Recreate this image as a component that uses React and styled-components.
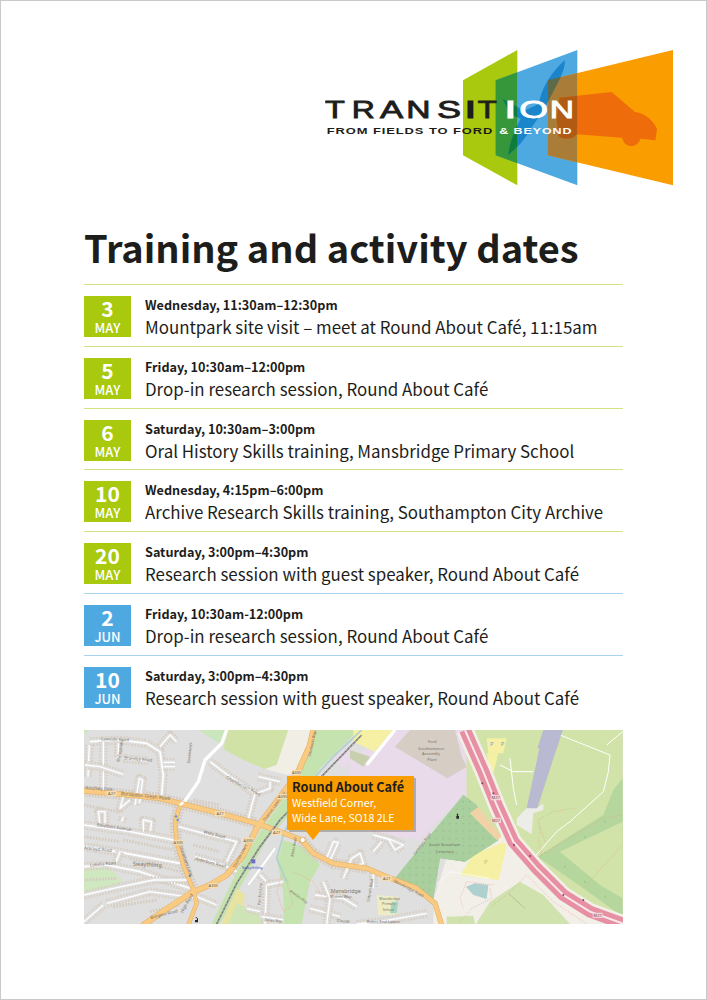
import React from "react";
import styled, { createGlobalStyle } from "styled-components";

const Global = createGlobalStyle`
  html, body { margin: 0; padding: 0; background: #fff; }
  body { font-family: "Noto Sans CJK SC", "Noto Sans", sans-serif; }
`;

const Page = styled.main`
  box-sizing: border-box;
  width: 707px;
  height: 1000px;
  border: 1px solid #c9c9c9;
  background: #fff;
  color: #1d1d1b;
  padding: 49px 33px 0 83px;
  overflow: hidden;
`;
const Header = styled.header`
  display: flex;
  justify-content: flex-end;
  height: 136px;
`;
const LogoSvg = styled.svg`
  display: block;
  width: 348px;
  height: 136px;
`;
const Title = styled.h1`
  margin: 35px 0 0;
  font-size: 38px;
  line-height: 52px;
  font-weight: 700;
  letter-spacing: 0;
  white-space: nowrap;
`;
const List = styled.ul`
  list-style: none;
  margin: 11px 0 0;
  padding: 0;
  width: 539px;
`;
const Row = styled.li`
  box-sizing: border-box;
  height: 61.83px;
  padding-top: 11px;
  display: flex;
  gap: 14px;
  border-top: 1px solid ${(p) => (p.$tone === "blue" ? "#a9d2ef" : "#d3e283")};
`;
const Badge = styled.div`
  flex: none;
  width: 47px;
  height: 41px;
  background: ${(p) => (p.$tone === "blue" ? "#4fa9e1" : "#a8c90e")};
  color: #fff;
  display: flex;
  flex-direction: column;
  align-items: center;
`;
const Day = styled.span`
  font-size: 21px;
  line-height: 24px;
  font-weight: 700;
`;
const Month = styled.span`
  font-size: 13px;
  line-height: 15px;
  font-weight: 500;
`;
const Body = styled.div`
  min-width: 0;
  white-space: nowrap;
`;
const When = styled.div`
  font-size: 12.65px;
  line-height: 18px;
  font-weight: 700;
`;
const What = styled.div`
  font-size: 16.9px;
  line-height: 26px;
  font-weight: 400;
`;
const MapBox = styled.section`
  position: relative;
  margin-top: 13px;
  width: 539px;
  height: 194px;
  overflow: hidden;
`;
const MapSvg = styled.svg`
  display: block;
  width: 539px;
  height: 194px;
`;
const Callout = styled.div`
  position: absolute;
  left: 203px;
  top: 46px;
  box-sizing: border-box;
  width: 127px;
  height: 54px;
  padding: 3px 5px 0;
  background: #f99d00;
  box-shadow: 2px 2px 0 rgba(110, 110, 110, 0.45);
  white-space: nowrap;
  &::after {
    content: "";
    position: absolute;
    left: 18px;
    top: 54px;
    border-style: solid;
    border-width: 10px 8.5px 0;
    border-color: #f99d00 transparent transparent;
  }
`;
const CalloutName = styled.div`
  font-size: 12.7px;
  line-height: 16px;
  font-weight: 700;
  color: #1d1d1b;
`;
const CalloutAddress = styled.div`
  font-size: 10.6px;
  line-height: 15px;
  color: #fff;
`;
const MapLabel = styled.text`
  font-family: "Noto Sans", "Liberation Sans", sans-serif;
  font-size: ${(p) => p.$size || 15}px;
  fill: ${(p) => p.$fill || "#77726a"};
`;
const LogoWord = styled.text`
  font-family: "Liberation Sans", sans-serif;
  font-size: 72px;
  font-weight: 400;
  stroke-width: 2.5px;
`;
const LogoLine = styled.text`
  font-family: "Liberation Sans", sans-serif;
  font-size: 28px;
  font-weight: 700;
  letter-spacing: 2px;
`;

const GREEN = "M459,123 L622,32 V438 L459,348 Z";
const BLUE = "M557,123 L802,32 V438 L557,348 Z";
const ORANGE = "M713,123 L1089,32 V438 L713,348 Z";
const PLANE =
  "M765,62 C735,88 712,120 695,160 L685,195 L642,214 L578,178 L600,224 L632,238 C612,275 598,315 595,346 C622,325 645,300 662,268 L700,214 L752,113 C760,95 765,80 765,62 Z";
const CAR =
  "M748,175 L905,158 L975,218 C1005,222 1032,245 1041,270 L1036,303 L991,298 C985,325 945,330 936,295 L800,285 C790,303 755,300 745,290 L740,240 Z";

const WORD = [
  ["T", 45, 1.35], ["R", 125, 1.33], ["A", 210, 1.45], ["N", 289, 1.4], ["S", 381, 1.5],
  ["I", 462, 1.9], ["T", 503, 1.3], ["I", 582, 1.9], ["O", 628, 1.54], ["N", 719, 1.4],
];

function Logo() {
  return (
    <LogoSvg viewBox="45 32 1044 408" role="img" aria-label="Transition logo">
      <defs>
        <clipPath id="clipGreen"><path d={GREEN} /></clipPath>
        <clipPath id="clipBlue"><path d={BLUE} /></clipPath>
        <clipPath id="clipOB"><path d="M713,123 L802,100 V370 L713,348 Z" /></clipPath>
      </defs>
      <path d={GREEN} fill="#a8c90e" />
      <path d={BLUE} fill="#4fa9e1" />
      <path d={BLUE} fill="#36973a" clipPath="url(#clipGreen)" />
      <path d={ORANGE} fill="#f99d00" />
      <path d={ORANGE} fill="#a97d37" clipPath="url(#clipBlue)" />
      <g clipPath="url(#clipBlue)"><path d={PLANE} fill="#1b85cb" /></g>
      <g clipPath="url(#clipGreen)"><g clipPath="url(#clipBlue)"><path d={PLANE} fill="#0f7c3c" /></g></g>
      <path d={PLANE} fill="#5f6a49" clipPath="url(#clipOB)" />
      <path d={CAR} fill="#ee6c09" />
      <path d={CAR} fill="#b15a14" clipPath="url(#clipBlue)" />
      {WORD.map(([c, x, s], i) => (
        <LogoWord
          key={i}
          transform={`translate(${x} 237) scale(${s} 1)`}
          fill={i > 6 ? "#fff" : "#1d1d1b"}
          stroke={i > 6 ? "#fff" : "#1d1d1b"}
        >
          {c}
        </LogoWord>
      ))}
      <LogoLine x="50" y="285" fill="#1d1d1b" textLength="500" lengthAdjust="spacingAndGlyphs">FROM FIELDS TO FORD</LogoLine>
      <LogoLine x="568" y="285" fill="#fff" textLength="219" lengthAdjust="spacingAndGlyphs">&amp; BEYOND</LogoLine>
    </LogoSvg>
  );
}

const AREAS = [
  ["M12,15 H30 L12,26 Z", "#c9e6bd"],
  ["M355,15 H445 L428,60 L410,50 Z", "#c9e6bd"],
  ["M445,15 H625 L590,120 L555,132 L490,105 L430,72 Z", "#d0e2a6"],
  ["M625,15 H700 L672,140 L620,150 L555,132 L590,120 Z", "#f1eee6"],
  ["M12,430 L70,420 L100,440 L130,470 L60,500 L12,500 Z", "#cfe8bf"],
  ["M705,15 H835 L720,130 L650,245 L560,345 L490,470 L420,597 H395 L470,440 L540,320 L640,180 Z", "#c5e3ae"],
  ["M610,345 L680,370 L720,420 L690,470 L665,597 H612 L610,505 L592,410 Z", "#c5e3ae"],
  ["M470,490 L495,510 L480,597 H425 Z", "#e8e3a0"],
  ["M470,535 L530,560 L550,597 H445 Z", "#cfe5b8"],
  ["M760,100 L805,65 L830,90 L790,130 Z", "#e9dbea"],
  ["M810,100 L880,60 L945,15 H1145 L1225,240 L1150,210 L1020,345 L810,310 Z", "#e9dbea"],
  ["M945,65 L990,15 H1125 L1145,95 L1160,125 L1102,160 Z", "#d6cdc4"],
  ["M820,15 H940 L885,80 L820,50 Z", "#f5f0a3"],
  ["M810,75 L870,95 L850,125 L810,100 Z", "#c7cfae"],
  ["M1160,15 H1628 V597 H1160 Z", "#d1e3a8"],
  ["M1060,597 L1062,520 L1100,400 L1155,410 L1250,350 L1290,300 L1330,360 L1390,430 L1490,520 L1560,597 Z", "#f2efe9"],
  ["M945,460 L1150,210 L1190,240 L1255,345 L1155,410 L1080,400 L1060,520 Z", "#a9cf9e"],
  ["M1140,450 L1180,390 L1285,345 L1255,465 Z", "#f5f0a3"],
  ["M1158,485 L1185,475 L1225,480 L1220,522 L1180,510 Z", "#aed1d0"],
  ["M1188,597 L1230,530 L1320,470 L1390,510 L1470,597 Z", "#d0e3ae"],
  ["M1100,597 L1100,575 L1180,572 L1185,597 Z", "#d0e3ae"],
  ["M1373,395 L1450,345 L1570,270 L1600,195 L1628,160 V575 L1510,490 Z", "#b5d79d"],
  ["M1440,380 L1628,290 V520 L1560,480 Z", "#d1e3a8"],
  ["M890,510 L955,515 L950,570 L895,570 Z", "#eeecc4"],
  ["M935,530 L955,530 L950,565 L930,565 Z", "#a6d6c0"],
  ["M1390,15 H1448 L1370,255 L1340,250 Z", "#b9b9d1"],
  ["M1310,280 L1340,250 L1370,250 L1390,235 L1390,255 L1360,265 L1355,328 L1310,300 Z", "#ecece8"],
  ["M1220,40 H1280 L1270,85 L1225,85 Z", "#f5f0a3"],
  ["M1220,85 H1255 L1240,145 L1230,145 Z", "#f5f0a3"],
];

/* Minor roads: a dashed band of houses either side, a gap of ground, then the white carriageway. */
const STREETS = [
  ["M30,50 L120,45 L200,55 L240,80 L250,150 L245,210", 5],
  ["M70,50 L70,195", 4],
  ["M28,60 L24,155", 4],
  ["M115,55 L115,100", 4],
  ["M15,120 L60,125 L130,148", 4],
  ["M130,100 L205,108", 4],
  ["M250,112 L285,112 M250,125 L285,125", 4],
  ["M165,240 L178,160 L188,165 L178,235", 4],
  ["M130,215 L120,250 L150,225", 4],
  ["M240,65 L270,30 L290,50", 4],
  ["M60,300 L55,260 L75,260 L75,295", 4],
  ["M190,325 L190,285 L215,290 L210,330", 4],
  ["M125,290 L130,275", 4],
  ["M390,110 L450,155 L525,205 L505,280", 4],
  ["M535,155 L600,170 M570,170 L570,190 L530,205", 4],
  ["M12,300 L140,318 L280,345", 5],
  ["M295,305 L390,330 L470,350 L435,420", 4],
  ["M12,365 L110,380 L300,415", 5],
  ["M345,395 L430,420 L470,440", 4],
  ["M120,380 L105,420", 4],
  ["M12,425 L80,420 L180,440 L330,490", 5],
  ["M12,510 L100,490 L220,465 L320,465", 4],
  ["M80,535 L210,500 L340,518", 4],
  ["M12,590 L70,540", 4],
  ["M350,515 L410,540", 4],
  ["M540,450 L560,470 L555,597", 4],
  ["M500,550 L540,560", 4],
  ["M560,480 L610,470", 4],
  ["M545,575 L610,585", 4],
  ["M740,400 L760,350 L775,352 L752,402 Z", 4],
  ["M705,510 L790,520 L830,545", 5],
  ["M690,550 L780,575", 4],
  ["M730,470 L750,520 L740,597", 4],
  ["M790,460 L815,400 L840,385 L850,415 L825,425", 4],
  ["M880,330 L935,345 L970,360 L945,375 L925,340", 4],
  ["M880,380 L905,350", 4],
  ["M830,597 L900,590 L1040,565", 4],
  ["M880,435 L880,490", 4],
];

const WHITE = [
  ["M440,15 L425,55 L375,105 L355,170 L310,235", 10],
  ["M945,15 L860,120", 10],
  ["M585,370 L505,480", 6],
  ["M1170,15 L1190,60 L1235,130", 3],
  ["M1260,120 L1300,140 L1360,140", 3],
  ["M1290,100 L1300,190 L1310,240", 3],
  ["M1440,30 L1590,90 L1585,140 L1570,200 L1470,290 L1430,320 L1360,400", 3],
  ["M1580,60 L1628,20", 3],
  ["M1230,460 L1110,440 L1070,480", 2],
];

const SALMON = [
  "M1380,325 L1375,285 L1420,260 L1490,248",
  "M1378,300 L1395,350",
  "M1385,390 L1375,340",
  "M1240,480 L1160,470 L1140,520 L1150,550",
  "M1230,490 L1235,520 L1175,550 L1140,590",
  "M1235,545 L1290,500 L1340,450 L1420,530 L1520,597",
  "M1375,395 L1570,280 L1628,270",
  "M1628,360 L1510,490",
  "M605,450 L590,500 L610,560 L640,540 L625,490 L620,460 Z",
  "M640,440 L700,470 L735,530",
];

const LABELS = [
  ["Lawside Road", 63, 46, 13, 2],
  ["Bramley Road", 132, 103, 13, 5],
  ["Bishopstoke", 118, 112, 12, -80],
  ["Greenways", 330, 115, 12, -85],
  ["Chamberlain Road", 438, 160, 13, 28],
  ["Hinchley Dale", 15, 193, 13, 3],
  ["Bursledon Green Road", 122, 210, 14, 6],
  ["Ethelbert Avenue", 50, 304, 13, 8],
  ["Wells Road", 370, 325, 13, 14],
  ["Ackroyd Road", 12, 372, 13, 6],
  ["Alderbury Road", 345, 405, 13, 14],
  ["Swaythling", 158, 422, 17, 3],
  ["Lobelia Road", 30, 425, 13, -5],
  ["Stoneham Lane", 298, 365, 13, 70],
  ["High Road", 308, 565, 13, -60],
  ["Burgess Road", 212, 582, 13, -14],
  ["Thomas Lewis Way", 555, 290, 12, -55],
  ["Thomas Lewis Way", 465, 430, 12, -62],
  ["Southern Way", 692, 95, 12, -78],
  ["Pen Ton Line", 541, 540, 11, -85],
  ["Mansbridge", 752, 503, 16, 0],
  ["Mones Way", 750, 520, 12, 0],
  ["Rhodes Way", 628, 500, 11, 35],
  ["Mons Road", 640, 395, 11, -80],
  ["Stiles Way", 555, 588, 11, 5],
  ["Claude", 770, 590, 12, 5],
  ["Ford", 1044, 55, 12, 0],
  ["Southampton", 1015, 74, 12, 0],
  ["Assembly", 1026, 90, 12, 0],
  ["Plant", 1042, 107, 12, 0],
  ["Cemetery Road", 1005, 390, 11, -52],
  ["South Stoneham", 1047, 364, 12, 0],
  ["Cemetery", 1067, 384, 12, 0],
  ["Mansbridge Road", 940, 470, 12, 28],
  ["Mansbridge", 898, 526, 11, 0],
  ["Primary", 906, 540, 11, 0],
  ["School", 908, 558, 11, 0],
  ["Riders End Lawns", 860, 595, 12, 0],
  ["Oldcroft Road", 868, 532, 11, -80],
];

const SHIELDS = [
  ["A27", 95, 205], ["A27", 420, 266], ["A27", 590, 322], ["A27", 920, 460],
  ["A335", 650, 143], ["A335", 608, 215], ["A335", 505, 345], ["A335", 400, 482], ["A335", 295, 352],
];

const MOTORWAY = "M1155,15 L1210,140 L1250,240 L1300,350 L1370,430 L1450,510 L1530,560 L1640,600";
const A27 = "M0,197 L100,205 L240,220 L300,235 L420,265 L530,295 L600,320 L665,345 L700,385 L760,415 L860,430 L920,455 L1010,490 L1065,535 L1085,600";
const A335 = "M700,15 L690,60 L650,150 L590,230 L530,310 L490,390 L440,450 L390,480 L340,500 L270,545 L190,600";
const LANE = "M300,240 L285,290 L290,350 L310,420 L340,495 L350,535 L325,600";
const RAIL = "M845,30 L700,180 L600,285 L540,365 L470,475 L410,597";
/* Terraces that line the trunk roads through the built-up area. */
const TERRACES = [
  "M0,197 L100,205 L240,220 L300,235 L420,265 L530,295",
  "M300,240 L285,290 L290,350 L310,420 L340,495",
  "M665,345 L700,385 L760,415 L860,430",
  "M12,240 L120,262 M12,335 L120,350 M130,345 L280,375 M12,465 L110,460 M150,400 L300,440",
  "M340,225 L420,240 M340,360 L420,380 M100,545 L230,525 M210,560 L300,540 M620,200 L560,260",
];

function Street({ d, w }) {
  return (
    <g fill="none" strokeLinejoin="round">
      <path d={d} stroke="#d8cfc4" strokeWidth={w + 22} strokeDasharray="5 4" />
      <path d={d} stroke="#e0dfdf" strokeWidth={w + 8} />
      <path d={d} stroke="#fff" strokeWidth={w} />
    </g>
  );
}

function MapArt() {
  return (
    <MapSvg viewBox="12 15 1617 582" role="img" aria-label="Map of Mansbridge and Swaythling">
      <defs>
        <pattern id="graves" width="20" height="22" patternUnits="userSpaceOnUse">
          <rect width="20" height="22" fill="#a9cf9e" />
          <path d="M9,7 l3,5 h-6 Z" fill="#8dbb85" />
        </pattern>
        <pattern id="wood" width="60" height="45" patternUnits="userSpaceOnUse">
          <path d="M15,15 l4,8 h-8 Z" fill="#9ccc8a" />
        </pattern>
      </defs>
      <rect x="12" y="15" width="1617" height="582" fill="#e0dfdf" />
      {AREAS.map(([d, fill], i) => (
        <path key={i} d={d} fill={fill} />
      ))}
      <path d="M945,460 L1150,210 L1190,240 L1255,345 L1155,410 L1080,400 L1060,520 Z" fill="url(#graves)" />
      <path d="M1170,265 L1195,245 L1265,335 L1250,345 Z" fill="#f0d2a6" />
      <path d="M1373,395 L1450,345 L1570,270 L1600,195 L1628,160 V290 L1440,380 L1560,480 L1628,520 V575 L1510,490 Z" fill="url(#wood)" />
      {TERRACES.map((d, i) => (
        <path key={i} d={d} fill="none" stroke="#d5ccc0" strokeWidth={i < 3 ? 34 : 9} strokeDasharray="5 4" />
      ))}
      {STREETS.map(([d, w], i) => (
        <Street key={i} d={d} w={w} />
      ))}
      {WHITE.map(([d, w], i) => (
        <path key={i} d={d} fill="none" stroke="#fff" strokeWidth={w} strokeLinejoin="round" />
      ))}
      {SALMON.map((d, i) => (
        <path key={i} d={d} fill="none" stroke="#e9a08e" strokeWidth="2" strokeDasharray="3 4" />
      ))}
      <path d="M845,15 L760,95 L710,150 L650,240 L610,330 L590,400 L620,470" fill="none" stroke="#aed1d0" strokeWidth="5" />
      <g fill="none" strokeLinejoin="round" strokeLinecap="round">
        <path d={A27} stroke="#e3ad66" strokeWidth="16" />
        <path d={A335} stroke="#e3ad66" strokeWidth="18" />
        <path d={LANE} stroke="#e3ad66" strokeWidth="13" />
        <path d={A27} stroke="#f9ca81" strokeWidth="13" />
        <path d={A335} stroke="#f9ca81" strokeWidth="15" />
        <path d={LANE} stroke="#f9ca81" strokeWidth="10" />
      </g>
      <circle cx="668" cy="345" r="8" fill="#fff" stroke="#e3ad66" strokeWidth="3" />
      <path d={RAIL} fill="none" stroke="#77777a" strokeWidth="5" />
      <path d={RAIL} fill="none" stroke="#fff" strokeWidth="1.5" strokeDasharray="6 6" />
      <g fill="none">
        <path d={MOTORWAY} stroke="#f2efe6" strokeWidth="52" />
        <path d={MOTORWAY} stroke="#e78fa3" strokeWidth="36" />
        <path d={MOTORWAY} stroke="#f8e9ea" strokeWidth="6" />
      </g>
      <path d="M1390,15 H1448 L1430,70 H1372 Z" fill="#b9b9d1" />
      <path d="M310,232 L300,240" stroke="#fff" strokeWidth="8" />
      <circle cx="288" cy="274" r="3.5" fill="#5a94d8" />
      <circle cx="293" cy="285" r="3.5" fill="#5a94d8" />
      <circle cx="329" cy="453" r="3.5" fill="#5a94d8" />
      <rect x="514" y="403" width="12" height="12" fill="#6f6cc8" />
      <MapLabel x="486" y="433" $size={12} $fill="#3f46c8">Swaythling</MapLabel>
      <path d="M345,585 h6 v-5 h-4 v-3 h4 v3 h3 v12 h-9 Z" fill="#2a2a2a" />
      <path d="M1130,266 h5 l-1,7 h3 v8 h-8 v-8 h2 Z" fill="#2a2a2a" />
      <MapLabel x="1230" y="62" $size={17} $fill="#6d9fdc">P</MapLabel>
      <MapLabel x="1262" y="62" $size={17} $fill="#6d9fdc">P</MapLabel>
      <MapLabel x="1212" y="418" $size={18} $fill="#b7bf8a">P</MapLabel>
      <path d="M1285,505 L1335,550" stroke="#8a8a84" strokeWidth="1.2" />
      {LABELS.map(([t, x, y, s, r], i) => (
        <MapLabel key={i} x={x} y={y} $size={s} transform={r ? `rotate(${r} ${x} ${y})` : undefined}>
          {t}
        </MapLabel>
      ))}
      {SHIELDS.map(([t, x, y], i) => (
        <g key={i}>
          <rect x={x - 15} y={y - 8} width="30" height="16" rx="2" fill="#f7dcb0" />
          <MapLabel x={x} y={y + 5} $size={12} $fill="#6b5e45" textAnchor="middle">{t}</MapLabel>
        </g>
      ))}
      {[[1247, 218], [1248, 286], [1553, 571]].map(([x, y], i) => (
        <g key={i}>
          <rect x={x - 15} y={y - 8} width="30" height="16" rx="2" fill="#f2d3d8" />
          <MapLabel x={x} y={y + 5} $size={12} $fill="#7a4a55" textAnchor="middle">M27</MapLabel>
        </g>
      ))}
      {[[1207, 175], [1240, 205], [1302, 360], [1350, 393], [1450, 510], [1510, 525]].map(([x, y], i) => (
        <circle key={i} cx={x} cy={y} r="3" fill="#8f3f55" />
      ))}
    </MapSvg>
  );
}

const EVENTS = [
  ["3", "MAY", "Wednesday, 11:30am–12:30pm", "Mountpark site visit – meet at Round About Café, 11:15am", "green", "green"],
  ["5", "MAY", "Friday, 10:30am–12:00pm", "Drop-in research session, Round About Café", "green", "green"],
  ["6", "MAY", "Saturday, 10:30am–3:00pm", "Oral History Skills training, Mansbridge Primary School", "green", "green"],
  ["10", "MAY", "Wednesday, 4:15pm–6:00pm", "Archive Research Skills training, Southampton City Archive", "green", "green"],
  ["20", "MAY", "Saturday, 3:00pm–4:30pm", "Research session with guest speaker, Round About Café", "green", "green"],
  ["2", "JUN", "Friday, 10:30am-12:00pm", "Drop-in research session, Round About Café", "blue", "blue"],
  ["10", "JUN", "Saturday, 3:00pm–4:30pm", "Research session with guest speaker, Round About Café", "blue", "blue"],
];

export default function App() {
  return (
    <>
      <Global />
      <Page>
        <Header>
          <Logo />
        </Header>
        <Title>Training and activity dates</Title>
        <List>
          {EVENTS.map(([day, month, when, what, tone, line]) => (
            <Row key={day + month} $tone={line}>
              <Badge $tone={tone}>
                <Day>{day}</Day>
                <Month>{month}</Month>
              </Badge>
              <Body>
                <When>{when}</When>
                <What>{what}</What>
              </Body>
            </Row>
          ))}
        </List>
        <MapBox>
          <MapArt />
          <Callout>
            <CalloutName>Round About Café</CalloutName>
            <CalloutAddress>Westfield Corner,</CalloutAddress>
            <CalloutAddress>Wide Lane, SO18 2LE</CalloutAddress>
          </Callout>
        </MapBox>
      </Page>
    </>
  );
}
